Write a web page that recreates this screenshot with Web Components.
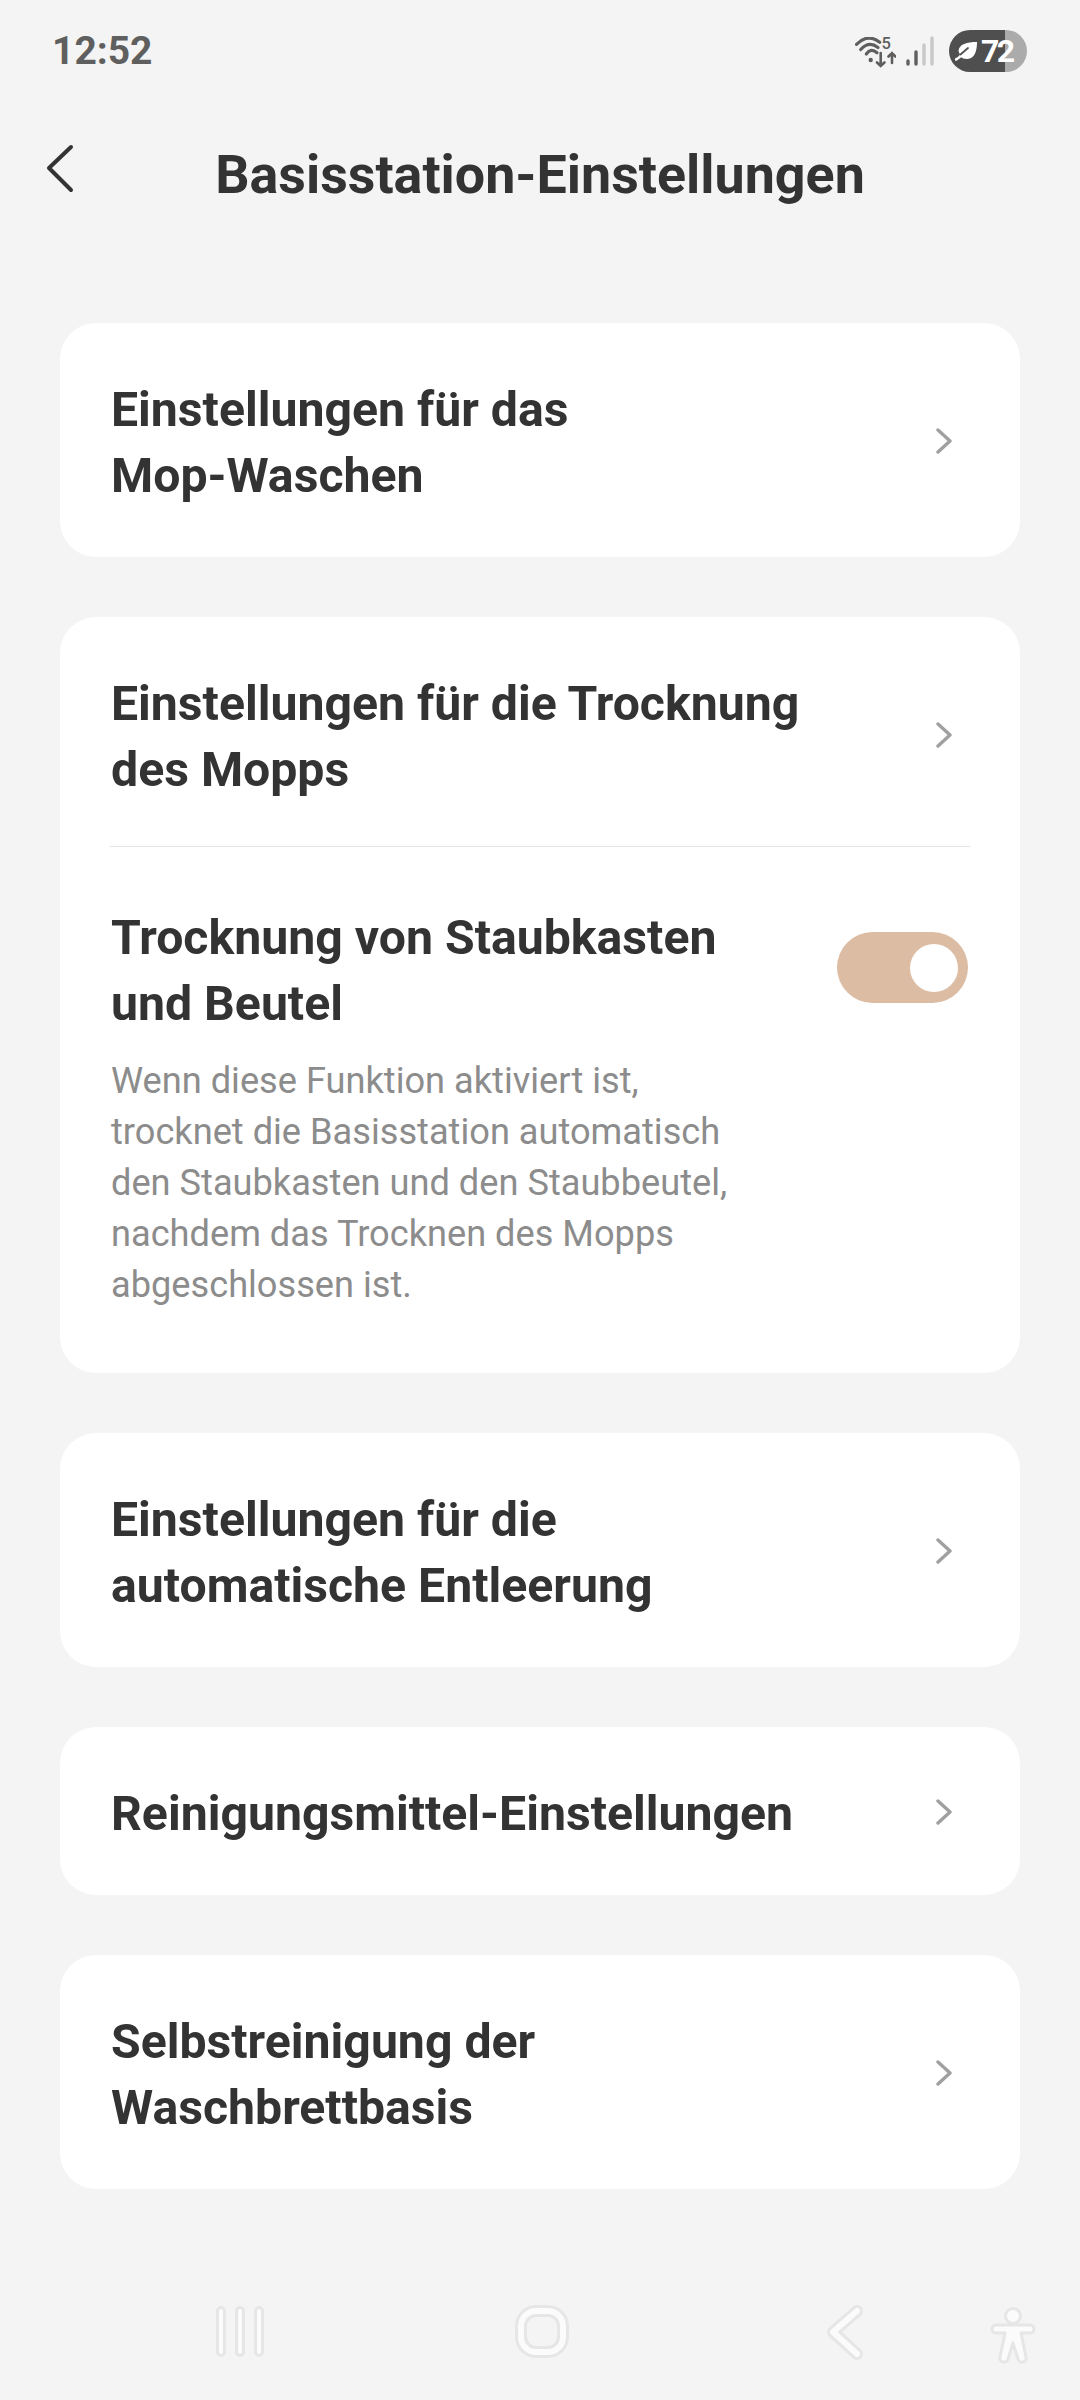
<!DOCTYPE html>
<html><head><meta charset="utf-8">
<style>
html,body{margin:0;padding:0;background:#f4f4f4}
body{width:1080px;height:2400px;overflow:hidden;font-family:Roboto,"Noto Sans",sans-serif;display:flex;flex-direction:column}
</style></head><body>
<template id="t-status"><style>
:host{display:flex;height:100px;box-sizing:border-box;padding:28px 53px 0 52px;justify-content:space-between;align-items:flex-start}
.t{font:700 39px/46px Roboto,sans-serif;color:#5f5f5f}
.r{display:flex;align-items:flex-start;height:46px}
svg{display:block}
.wrap{position:relative;width:41px;height:32px;margin-top:9px}
.five{position:absolute;left:26.500px;top:-2px;font:500 16.500px/18px Roboto,sans-serif;color:#5f5f5f}
.g{margin:8px 0 0 10px}
.b{position:relative;width:78px;height:42px;border-radius:21px;background:linear-gradient(90deg,#4f4f4f 0 56px,#ababab 56px);margin:2px 0 0 15px;color:#fff;font:700 32px/42px Roboto,sans-serif;box-sizing:border-box;padding-left:32px;letter-spacing:-2.500px}
.b svg{position:absolute;left:6px;top:12px}
</style><span class="t">12:52</span><div class="r">
<div class="wrap"><svg width="41" height="32" viewBox="0 0 41 32" fill="none" stroke="#5f5f5f" stroke-width="3.200" stroke-linecap="round"><path d="M1.500 7.300Q13-4 24.700 5.300"/><path d="M5.700 12.500Q14 3.500 23 10.500"/><path d="M11.300 17Q16 10.500 22 15.700"/><circle cx="15.700" cy="23" r="2.200" fill="#5f5f5f" stroke="none"/><path d="M25.700 16v13M22 25.500l3.700 3.500 3.700-3.500M37 26V16M33.500 19.500l3.500-3.500 3.500 3.500" stroke-width="2.600"/></svg><span class="five">5</span></div>
<svg class="g" width="28" height="30" viewBox="0 0 28 30" fill="none" stroke-width="3.400" stroke-linecap="round"><path d="M2 28v-3M10 28V16" stroke="#5f5f5f"/><path d="M18 28V9M26 28V2" stroke="#c8c8c8"/></svg>
<div class="b"><svg width="23" height="19" viewBox="0 0 23 19"><path d="M3.500 9C4 2 12 0 22 0c0 8-2 17-10 17-3 0-5-1-6-2z" fill="#fff"/><path d="M1 17.500C3 16.500 5 15 6.500 13" stroke="#fff" stroke-width="2.600" fill="none" stroke-linecap="round"/><path d="M5.500 12.500 13 6" stroke="#4f4f4f" stroke-width="1.800" fill="none" stroke-linecap="round"/></svg>72</div>
</div></template>

<template id="t-head"><style>
:host{display:block;position:relative;height:223px;box-sizing:border-box;padding-top:37px}
h1{margin:0;text-align:center;font:700 53.800px/76px Roboto,sans-serif;color:#333}
svg{position:absolute;left:46px;top:44px}
</style><svg width="28" height="50" viewBox="0 0 28 50" fill="none" stroke="#333" stroke-width="4" stroke-linecap="round" stroke-linejoin="round"><path d="M25 3 3 24l22 22"/></svg><h1><slot></slot></h1></template>

<template id="t-card"><style>
:host{display:block;background:#fff;border-radius:36px;margin:0 60px 60px;padding:0 50px}
</style><slot></slot></template>

<template id="t-row"><style>
:host{display:flex;align-items:center;justify-content:space-between;box-sizing:border-box}
:host(.two){height:234px;padding-top:1px}
:host(.one){height:168px;padding-top:2px}
:host(.line){border-bottom:1px solid #e4e4e4;height:230px;padding-top:6px}
.l{font:700 48.200px/66px Roboto,sans-serif;color:#333;width:760px;margin-left:1px;padding-top:4px}
svg{margin-right:16px;flex:none}
</style><div class="l"><slot></slot></div><svg width="18" height="28" viewBox="0 0 18 28" fill="none" stroke="#a0a0a0" stroke-width="3.400" stroke-linecap="round" stroke-linejoin="round"><path d="M2 3l12 11L2 25"/></svg></template>

<template id="t-toggle-row"><style>
:host{display:flex;justify-content:space-between;align-items:flex-start;padding:58px 0 63px}
.l{font:700 48.200px/66px Roboto,sans-serif;color:#333;width:680px;margin-left:1px}
.d{font:400 36.200px/51px Roboto,sans-serif;color:#8c8c8c;width:660px;margin:18px 0 0 1px}
.s{width:131px;height:71px;border-radius:36px;background:#dcbca3;position:relative;margin:27px 2px 0 0;flex:none}
.s i{position:absolute;right:10px;top:12px;width:48px;height:48px;border-radius:50%;background:#fff}
</style><div><div class="l"><slot name="title"></slot></div><div class="d"><slot name="desc"></slot></div></div><div class="s"><i></i></div></template>

<template id="t-nav"><style>
:host{display:block;position:absolute;left:0;top:2270px;width:1080px;height:130px}
svg{position:absolute;left:0;top:0}
</style><svg width="1080" height="130" viewBox="0 0 1080 130" fill="#fbfbfb" stroke="#e6e6e6" stroke-width="3">
<rect x="217.500" y="37.500" width="7" height="48" rx="3.500"/><rect x="236.500" y="37.500" width="7" height="48" rx="3.500"/><rect x="255.500" y="37.500" width="7" height="48" rx="3.500"/>
<rect x="521" y="41" width="42" height="41" rx="15" fill="none" stroke="#e6e6e6" stroke-width="12"/><rect x="521" y="41" width="42" height="41" rx="15" fill="none" stroke="#fbfbfb" stroke-width="6"/>
<path d="M857 41 833 62l24 22" fill="none" stroke="#e6e6e6" stroke-width="12" stroke-linecap="round" stroke-linejoin="round"/><path d="M857 41 833 62l24 22" fill="none" stroke="#fbfbfb" stroke-width="6" stroke-linecap="round" stroke-linejoin="round"/>
<circle cx="1013" cy="46" r="7.500"/><path d="M996 55h34a4 4 0 0 1 0 8h-9l5 24a4 4 0 0 1-8 2l-5-16-5 16a4 4 0 0 1-8-2l5-24h-9a4 4 0 0 1 0-8z" stroke-linejoin="round"/></svg></template>

<script>
function def(n,tid){customElements.define(n,class extends HTMLElement{constructor(){super();this.attachShadow({mode:'open'}).appendChild(document.getElementById(tid).content.cloneNode(true))}})}
def('status-bar','t-status');def('page-head','t-head');def('set-card','t-card');def('set-row','t-row');def('toggle-row','t-toggle-row');def('nav-bar','t-nav');
</script>
<status-bar></status-bar>
<page-head>Basisstation-Einstellungen</page-head>
<set-card><set-row class="two">Einstellungen für das<br>Mop-Waschen</set-row></set-card>
<set-card>
<set-row class="line">Einstellungen für die Trocknung<br>des Mopps</set-row>
<toggle-row><span slot="title">Trocknung von Staubkasten<br>und Beutel</span><span slot="desc">Wenn diese Funktion aktiviert ist,<br>trocknet die Basisstation automatisch<br>den Staubkasten und den Staubbeutel,<br>nachdem das Trocknen des Mopps<br>abgeschlossen ist.</span></toggle-row>
</set-card>
<set-card><set-row class="two">Einstellungen für die<br>automatische Entleerung</set-row></set-card>
<set-card><set-row class="one">Reinigungsmittel-Einstellungen</set-row></set-card>
<set-card><set-row class="two">Selbstreinigung der<br>Waschbrettbasis</set-row></set-card>
<nav-bar></nav-bar>
</body></html>
